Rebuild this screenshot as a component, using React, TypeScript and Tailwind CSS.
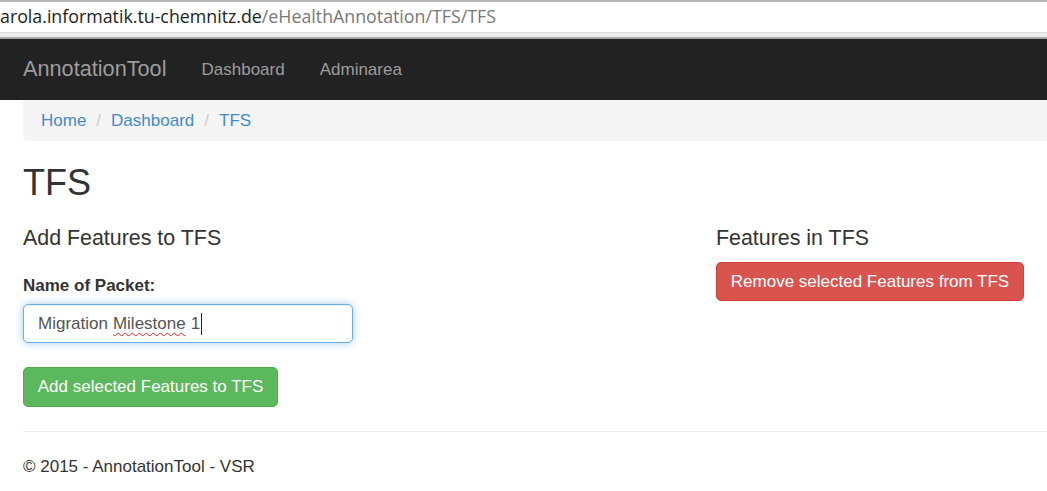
import React from "react";

const sans = { fontFamily: '"Liberation Sans", Arial, sans-serif' };

function AddressBar() {
  return (
    <div>
      <div className="h-[32px] border-t-2 border-[#b8b8b8] bg-white">
        <p
          className="whitespace-nowrap pt-[2px] text-[17.8px] leading-[25px] text-[#222]"
          style={{ fontFamily: '"Open Sans", "Noto Sans", sans-serif' }}
        >
          arola.informatik.tu-chemnitz.de
          <span className="text-[#777]">/eHealthAnnotation/TFS/TFS</span>
        </p>
      </div>
      <div className="h-[7px] border-t border-b-2 border-t-[#dcdcdc] border-b-[#a8a8a8] bg-[#ececec]" />
    </div>
  );
}

function Navbar() {
  return (
    <nav className="flex h-[61px] items-center bg-[#222] pl-[23px]">
      <span className="text-[21.7px] text-[#9d9d9d]">AnnotationTool</span>
      <span className="ml-[35px] text-[17px] text-[#9d9d9d]">Dashboard</span>
      <span className="ml-[35px] text-[17px] text-[#9d9d9d]">Adminarea</span>
    </nav>
  );
}

function Breadcrumb() {
  const items = ["Home", "Dashboard", "TFS"];
  return (
    <div className="ml-[23px] flex h-[41px] items-center rounded-bl-[5px] bg-[#f5f5f5] pl-[18px] text-[17px]">
      {items.map((item, i) => (
        <React.Fragment key={item}>
          {i > 0 && <span className="px-[10px] text-[#ccc]">/</span>}
          <span className="text-[#428bca]">{item}</span>
        </React.Fragment>
      ))}
    </div>
  );
}

export default function App() {
  return (
    <div className="h-[491px] overflow-hidden bg-white text-[#333]" style={sans}>
      <AddressBar />
      <Navbar />
      <Breadcrumb />

      <main className="pl-[23px]">
        <h1 className="mt-[22px] text-[36px] leading-[40px] text-[#333]">TFS</h1>

        <div className="mt-[23px] flex">
          <section className="w-[693px]">
            <h4 className="text-[21.4px] leading-[24px]">Add Features to TFS</h4>
            <p className="mt-[26px] text-[17px] font-bold leading-[20px]">Name of Packet:</p>
            <div className="mt-[8px] flex h-[39px] w-[330px] items-center rounded-[5px] border border-[#66afe9] pl-[14px] text-[17px] text-[#555] shadow-[inset_0_1px_1px_rgba(0,0,0,0.075),0_0_8px_rgba(102,175,233,0.6)]">
              Migration{" "}
              <span className="ml-[5px] underline decoration-[#e02020] decoration-wavy decoration-1 underline-offset-[3px]">
                Milestone
              </span>
              <span className="ml-[5px]">1</span>
              <span className="ml-[1px] h-[22px] w-px bg-[#222]" />
            </div>
            <button className="mt-[24px] flex h-[40px] w-[255px] items-center justify-center rounded-[5px] border border-[#4cae4c] bg-[#5cb85c] text-[17px] text-white">
              Add selected Features to TFS
            </button>
          </section>

          <section>
            <h4 className="text-[21.4px] leading-[24px]">Features in TFS</h4>
            <button className="mt-[12px] flex h-[39px] w-[308px] items-center justify-center rounded-[5px] border border-[#d43f3a] bg-[#d9534f] text-[17px] text-white">
              Remove selected Features from TFS
            </button>
          </section>
        </div>

        <hr className="mt-[24px] border-t border-[#eee]" />
        <footer className="mt-[25px] text-[17px] leading-[20px]">© 2015 - AnnotationTool - VSR</footer>
      </main>
    </div>
  );
}
